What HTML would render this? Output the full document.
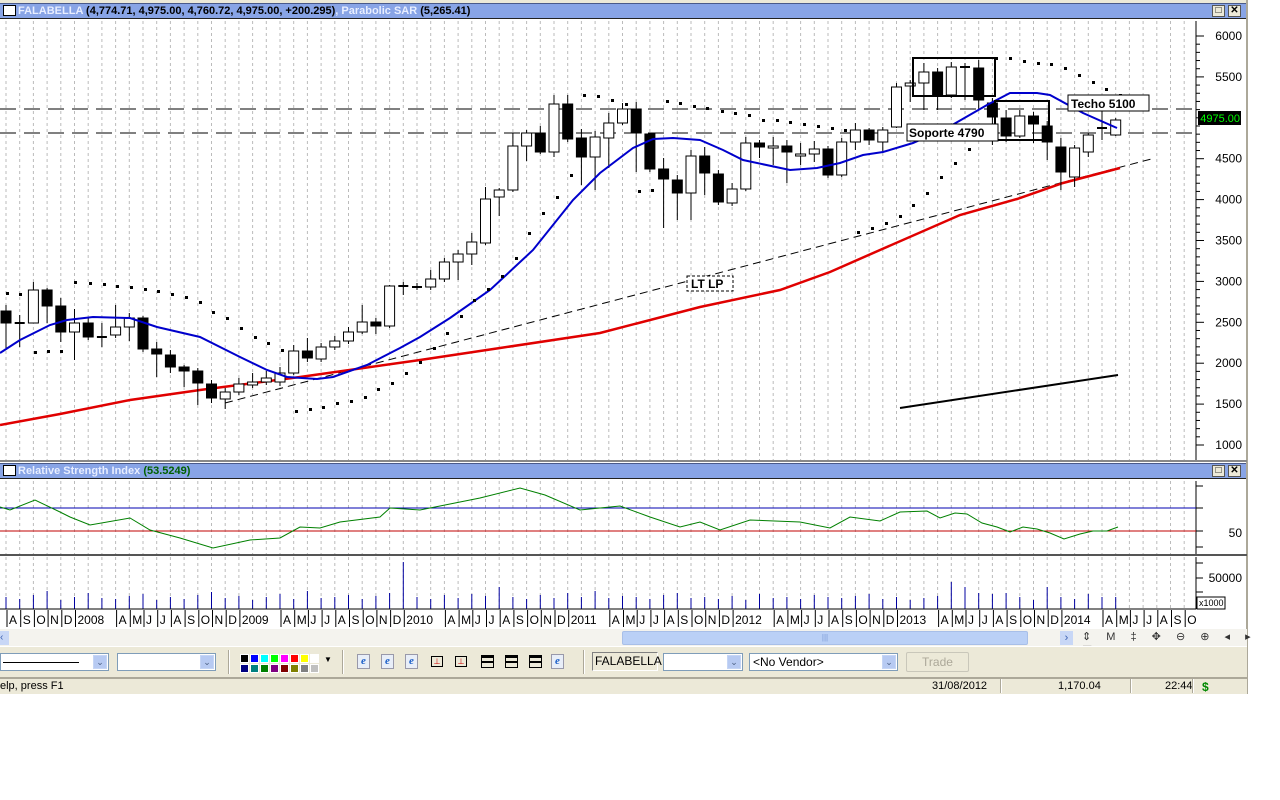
<!DOCTYPE html>
<html><head><meta charset="utf-8"><style>
*{margin:0;padding:0;box-sizing:border-box}
body{width:1280px;height:800px;background:#fff;font-family:"Liberation Sans",Arial,sans-serif;position:relative;overflow:hidden}
.tb{position:absolute;left:0;width:1247px;height:16px;background:#88a4e6;border-top:1px solid #4a5a8a;border-bottom:1px solid #222;font:bold 11px "Liberation Sans",sans-serif;line-height:14px;white-space:nowrap}
.tb .w{color:#e8eeff}
.tb .ic{display:inline-block;width:13px;height:11px;border:1px solid #000;background:#fff;vertical-align:-2px;margin:0 2px 0 3px}
.btn{position:absolute;top:1px;width:13px;height:12px;background:#ece9d8;border:1px solid #555;font-size:10px;line-height:10px;text-align:center;color:#000}
.bar{position:absolute;left:0;width:1247px;background:#ece9d8}
.combo{position:absolute;height:18px;background:#fff;border:1px solid #7f9db9}
.combo .dd{position:absolute;right:1px;top:1px;width:14px;height:14px;background:#b7caf2;border:1px solid #c5d5f5;font-size:9px;color:#4d6185;text-align:center;line-height:13px}
.st{position:absolute;top:680px;font-size:11px;color:#000}
</style></head><body>
<div style="position:absolute;left:0;top:0;width:1247px;height:4px;background:#ece9d8"></div>
<div class="tb" style="top:3px"><span class="ic"></span><span class="w">FALABELLA</span> (4,774.71, 4,975.00, 4,760.72, 4,975.00, +200.295)<span class="w">, Parabolic SAR</span> (5,265.41)
<div class="btn" style="left:1212px">□</div><div class="btn" style="left:1228px;font-weight:bold">✕</div></div>
<div class="tb" style="top:463px"><span class="ic"></span><span class="w">Relative Strength Index</span> <span style="color:#006000">(53.5249)</span>
<div class="btn" style="left:1212px">□</div><div class="btn" style="left:1228px;font-weight:bold">✕</div></div>
<svg id="s" width="1280" height="800" style="position:absolute;left:0;top:0" xmlns="http://www.w3.org/2000/svg" font-family="Liberation Sans, sans-serif"></svg>
<div class="bar" style="top:629px;height:17px;background:#f4f3ee"></div>
<div style="position:absolute;left:0;top:631px;width:9px;height:14px;background:#c8d7f6;font-size:10px;color:#3a5fb0;line-height:14px">‹</div>
<div style="position:absolute;left:622px;top:631px;width:406px;height:14px;background:#bad0f6;border:1px solid #a8bfe8;border-radius:2px;font-size:8px;color:#7d9ad6;text-align:center;line-height:12px">|||</div>
<div style="position:absolute;left:1060px;top:631px;width:13px;height:14px;background:#c8d7f6;font-size:11px;color:#3a5fb0;line-height:14px;text-align:center">›</div>
<div style="position:absolute;left:1082px;top:630px;font-size:11px;color:#333;letter-spacing:6px">⇕ M ‡ ✥ ⊖ ⊕ ◂ ▸ ▤</div>
<div class="bar" style="top:646px;height:32px;border-top:1px solid #fff;border-bottom:1px solid #aca899"></div>
<div class="combo" style="left:0;top:653px;width:109px"><div style="position:absolute;left:2px;top:8px;width:76px;height:1px;background:#000"></div><div class="dd">⌄</div></div>
<div class="combo" style="left:117px;top:653px;width:99px"><div class="dd">⌄</div></div>
<div style="position:absolute;left:228px;top:650px;width:2px;height:24px;border-left:1px solid #aca899;border-right:1px solid #fff"></div>
<div id="pal" style="position:absolute;left:240px;top:654px;width:84px;height:18px"></div>
<div style="position:absolute;left:324px;top:655px;font-size:8px">▼</div>
<div style="position:absolute;left:342px;top:650px;width:2px;height:24px;border-left:1px solid #aca899;border-right:1px solid #fff"></div>
<div id="icons" style="position:absolute;left:357px;top:654px;width:215px;height:16px"></div>
<div style="position:absolute;left:583px;top:650px;width:2px;height:24px;border-left:1px solid #aca899;border-right:1px solid #fff"></div>
<div style="position:absolute;left:592px;top:652px;width:66px;height:19px;border:1px solid;border-color:#808080 #fff #fff #808080;font-size:12px;line-height:17px;padding-left:2px">FALABELLA</div>
<div class="combo" style="left:663px;top:653px;width:80px"><div class="dd">⌄</div></div>
<div class="combo" style="left:749px;top:653px;width:149px;font-size:12px;line-height:16px;padding-left:3px">&lt;No Vendor&gt;<div class="dd">⌄</div></div>
<div style="position:absolute;left:906px;top:652px;width:63px;height:20px;border:1px solid #c9c7ba;border-radius:2px;font-size:12px;color:#aca899;text-align:center;line-height:18px">Trade</div>
<div class="bar" style="top:678px;height:16px;border-top:1px solid #aca899"></div>
<div class="st" style="left:0">elp, press F1</div>
<div class="st" style="left:932px">31/08/2012</div>
<div class="st" style="left:1058px">1,170.04</div>
<div class="st" style="left:1165px">22:44</div>
<div class="st" style="left:1202px;color:#080;font-weight:bold;font-size:12px">$</div>
<div style="position:absolute;left:1000px;top:679px;width:2px;height:14px;border-left:1px solid #aca899;border-right:1px solid #fff"></div>
<div style="position:absolute;left:1130px;top:679px;width:2px;height:14px;border-left:1px solid #aca899;border-right:1px solid #fff"></div>
<div style="position:absolute;left:1192px;top:679px;width:2px;height:14px;border-left:1px solid #aca899;border-right:1px solid #fff"></div>
<script>
var S=document.getElementById('s'),h='';
function L(a,b,c,d,st){h+='<line x1="'+a+'" y1="'+b+'" x2="'+c+'" y2="'+d+'" '+st+'/>';}
function P(pts,st){h+='<polyline fill="none" points="'+pts.map(function(p){return p.join(',')}).join(' ')+'" '+st+'/>';}
function T(x,y,t,st){h+='<text x="'+x+'" y="'+y+'" '+(st||'')+'>'+t+'</text>';}
// pane frames
h+='<rect x="0" y="21" width="1247" height="440" fill="#fff"/>';
L(1247,0,1247,694,'stroke="#aca899" stroke-width="2"');
L(0,461,1247,461,'stroke="#888" stroke-width="2"');
L(0,555,1247,555,'stroke="#555" stroke-width="2"');
// vertical grid
for(var i=0;i<87;i++){var x=6+13.7*i;if(x>1194)break;
 L(x,21,x,460,'stroke="#bbb" stroke-dasharray="3,3"');L(x,481,x,554,'stroke="#bbb" stroke-dasharray="3,3"');L(x,557,x,609,'stroke="#bbb" stroke-dasharray="3,3"');}
// axes
L(1196,21,1196,460,'stroke="#000"');L(1196,481,1196,554,'stroke="#000"');L(1196,557,1196,609,'stroke="#000"');
var labs=[6000,5500,5000,4500,4000,3500,3000,2500,2000,1500,1000];
for(var p=1000;p<=6000;p+=100){var y=36+(6000-p)*0.0818;L(1196,y,p%500?1200:1204,y,'stroke="#000"');}
labs.forEach(function(p){var y=36+(6000-p)*0.0818;if(p!=5000)T(1242,y+4,p,'font-size="12" text-anchor="end"');});
h+='<rect x="1198" y="111" width="43" height="14" fill="#000"/>';T(1240,122,'4975.00','font-size="11" fill="#0f0" text-anchor="end"');
[486,508,531,547].forEach(function(y){L(1196,y,1203,y,'stroke="#000"');});
T(1242,537,'50','font-size="12" text-anchor="end"');
[563,578,592].forEach(function(y){L(1196,y,1203,y,'stroke="#000"');});
T(1242,582,'50000','font-size="12" text-anchor="end"');
h+='<rect x="1197" y="597" width="28" height="12" fill="#fff" stroke="#000"/>';T(1199,606,'x1000','font-size="9"');
// dashed horizontals
L(0,109,1196,109,'stroke="#000" stroke-dasharray="16,8"');L(0,133,1196,133,'stroke="#000" stroke-dasharray="16,8"');
// trendline & black line
L(225,403,1155,158,'stroke="#000" stroke-dasharray="8,5"');
L(900,408,1118,375,'stroke="#000" stroke-width="2"');
// red MA
P([[0,425],[60,414],[130,400],[200,390],[300,377],[420,360],[500,348],[600,333],[700,307],[780,290],[830,272],[880,250],[960,215],[1017,199],[1063,183],[1120,168]],'stroke="#e00000" stroke-width="2.5"');
// candles [type, top, bottom, high, low]
var C=[[1,311,323,305,348],[2,323,323,315,347],[0,290,323,282,323],[1,290,306,288,323],[1,306,332,298,342],[0,323,332,309,360],[1,323,337,318,340],[2,337,337,323,347],[0,327,335,305,338],[0,318,327,313,341],[1,318,349,316,352],[1,349,354,342,377],[1,355,367,350,373],[1,367,371,365,387],[1,371,383,368,405],[1,384,398,380,403],[0,392,399,388,409],[0,384,392,378,395],[0,382,385,373,388],[0,378,382,371,385],[0,373,382,367,386],[0,351,373,345,375],[1,351,358,338,362],[0,347,359,343,362],[0,341,347,336,350],[0,332,341,327,344],[0,322,332,305,334],[1,322,326,318,334],[0,286,326,285,328],[2,286,286,282,295],[2,287,287,283,290],[0,279,287,270,290],[0,262,279,258,282],[0,254,262,250,280],[0,242,254,233,265],[0,199,243,187,245],[0,190,197,188,216],[0,146,190,133,192],[0,133,146,130,161],[1,133,152,126,154],[0,104,152,95,157],[1,104,139,95,142],[1,138,157,129,185],[0,137,157,131,190],[0,123,138,113,168],[0,109,123,103,125],[1,109,133,102,172],[1,134,169,133,172],[1,169,179,158,228],[1,180,193,175,220],[0,156,193,150,220],[1,156,173,147,195],[1,174,202,170,205],[0,189,203,183,206],[0,143,189,137,191],[1,143,147,140,158],[0,146,148,137,165],[1,146,152,140,183],[0,154,156,143,165],[0,149,154,141,162],[1,149,175,146,178],[0,142,175,138,177],[0,130,142,123,150],[1,130,140,128,145],[0,130,142,127,152],[0,87,127,83,128],[0,83,86,80,102],[0,72,83,63,110],[1,72,95,68,110],[0,67,95,62,98],[2,67,67,63,100],[1,68,100,60,110],[1,103,117,98,145],[1,118,136,110,142],[0,116,136,110,138],[1,116,124,112,143],[1,126,142,121,160],[1,147,172,138,190],[0,148,177,145,187],[0,135,152,133,157],[2,128,128,100,140],[0,120,135,118,136]];
C.forEach(function(c,k){var x=6+13.7*k;L(x,c[3],x,c[4],'stroke="#000"');
 if(c[0]==2){L(x-5,c[1],x+5,c[1],'stroke="#000" stroke-width="2"');}
 else h+='<rect x="'+(x-5)+'" y="'+c[1]+'" width="10" height="'+Math.max(2,c[2]-c[1])+'" fill="'+(c[0]?'#000':'#fff')+'" stroke="#000"/>';});
// blue MA
P([[0,353],[20,340],[50,325],[67,320],[93,317],[130,318],[157,327],[200,337],[240,357],[267,370],[287,377],[317,379],[333,377],[367,365],[400,348],[420,337],[450,318],[490,290],[533,250],[573,200],[600,173],[633,148],[653,139],[673,138],[700,140],[723,150],[743,160],[790,170],[817,168],[840,163],[863,155],[883,152],[913,143],[947,128],[987,105],[1010,93],[1037,93],[1050,95],[1083,113],[1117,128]],'stroke="#0000cc" stroke-width="2"');
// SAR dots
var D=[[7,293],[20,294],[35,352],[48,351],[61,351],[75,282],[90,283],[104,284],[117,286],[131,287],[145,289],[158,291],[172,294],[186,297],[200,302],[213,312],[227,318],[241,328],[255,337],[268,343],[282,350],[296,411],[310,409],[323,407],[337,403],[351,401],[365,397],[378,389],[392,383],[406,373],[420,362],[434,348],[447,333],[461,316],[474,300],[488,289],[502,276],[516,258],[529,233],[543,213],[557,197],[571,175],[584,95],[598,96],[612,100],[626,104],[639,191],[652,190],[667,101],[680,103],[694,106],[707,108],[722,111],[735,113],[749,115],[763,120],[777,120],[790,122],[804,124],[818,126],[832,128],[845,130],[858,232],[872,228],[886,223],[900,216],[913,205],[927,193],[941,177],[955,163],[969,149],[996,58],[1010,58],[1024,61],[1038,63],[1051,64],[1065,68],[1079,75],[1093,82],[1106,89],[1120,95]];
D.forEach(function(d){h+='<rect x="'+(d[0]-1)+'" y="'+(d[1]-1)+'" width="3" height="3" fill="#000"/>';});
// boxes
h+='<rect x="913" y="58" width="82" height="38" fill="none" stroke="#000" stroke-width="2"/>';
h+='<rect x="995" y="101" width="54" height="39" fill="none" stroke="#000" stroke-width="2"/>';
h+='<rect x="1068" y="95" width="81" height="16" fill="#fff" stroke="#000"/>';T(1071,108,'Techo 5100','font-size="12" font-weight="bold"');
h+='<rect x="907" y="124" width="91" height="17" fill="#fff" stroke="#000"/>';T(909,137,'Soporte 4790','font-size="12" font-weight="bold"');
h+='<rect x="687" y="276" width="46" height="15" fill="#fff" stroke="#000" stroke-dasharray="3,2"/>';T(691,288,'LT LP','font-size="12" font-weight="bold"');
// RSI
h+='<rect x="0" y="481" width="1196" height="73" fill="none"/>';
L(0,508,1196,508,'stroke="#0000b0"');L(0,531,1196,531,'stroke="#c00000"');
P([[0,507],[10,510],[35,500],[60,512],[70,517],[90,525],[130,518],[150,530],[180,538],[213,548],[250,540],[280,538],[300,527],[320,528],[340,522],[380,517],[390,508],[420,510],[440,506],[480,498],[520,488],[545,495],[580,510],[620,506],[650,517],[680,527],[700,522],[720,530],[750,520],[800,522],[830,528],[850,517],[880,521],[900,512],[927,511],[940,518],[955,513],[967,514],[982,523],[997,527],[1010,532],[1023,527],[1037,529],[1050,533],[1064,539],[1080,534],[1093,531],[1107,531],[1118,527]],'stroke="#008000"');
// volume
var V=[12,10,14,18,9,12,16,11,10,13,15,9,12,10,14,17,11,13,9,12,15,10,18,11,12,14,10,13,16,47,12,10,14,11,15,13,22,12,10,14,11,16,12,18,11,13,12,10,14,16,11,12,10,13,9,15,11,12,10,14,12,11,13,15,10,12,9,11,13,27,22,16,15,16,12,9,22,12,10,15,12,12];
V.forEach(function(v,k){var x=6+13.7*k;L(x,609-v,x,609,'stroke="#0000a0"');});
L(0,609,1196,609,'stroke="#000"');
// month axis
var M=['A','S','O','N','D','2008','','','A','M','J','J','A','S','O','N','D','2009','','','A','M','J','J','A','S','O','N','D','2010','','','A','M','J','J','A','S','O','N','D','2011','','','A','M','J','J','A','S','O','N','D','2012','','','A','M','J','J','A','S','O','N','D','2013','','','A','M','J','J','A','S','O','N','D','2014','','','A','M','J','J','A','S','O'];
h+='<svg x="0" y="610" width="1196" height="19">';
M.forEach(function(m,i){if(!m)return;var x=7+13.7*i;h+='<line x1="'+x+'" y1="0" x2="'+x+'" y2="17" stroke="#000"/><text x="'+(x+2)+'" y="14" font-size="12">'+m+'</text>';});
h+='</svg>';
S.innerHTML=h;
// palette
var cols=['#000','#00f','#0ff','#0f0','#f0f','#f00','#ff0','#fff','#000080','#008080','#008000','#800080','#800000','#808000','#808080','#c0c0c0'],ph='';
cols.forEach(function(c,i){ph+='<div style="position:absolute;left:'+(i%8)*10+'px;top:'+Math.floor(i/8)*10+'px;width:9px;height:9px;background:'+c+';border:1px solid #fff"></div>';});
document.getElementById('pal').innerHTML=ph;
var ic=['e','e','e','a','a','w','w','w','e'],xs=[0,24,48,74,98,124,148,172,194],ih='';
ic.forEach(function(t,i){if(t=='e')ih+='<div style="position:absolute;left:'+xs[i]+'px;top:0;width:13px;height:15px;background:#e8eef8;border:1px solid #99a;color:#1c5fc8;font:bold italic 11px serif;text-align:center;line-height:13px">e</div>';
 else if(t=='a')ih+='<div style="position:absolute;left:'+xs[i]+'px;top:2px;width:12px;height:11px;border:1px solid #000;font-size:8px;color:#c00;text-align:center;line-height:9px">⊥</div>';
 else ih+='<div style="position:absolute;left:'+xs[i]+'px;top:1px;width:13px;height:13px;border:1px solid #000;border-top:3px solid #000"><div style="margin-top:3px;height:2px;background:#000"></div></div>';});
document.getElementById('icons').innerHTML=ih;
</script>
</body></html>
